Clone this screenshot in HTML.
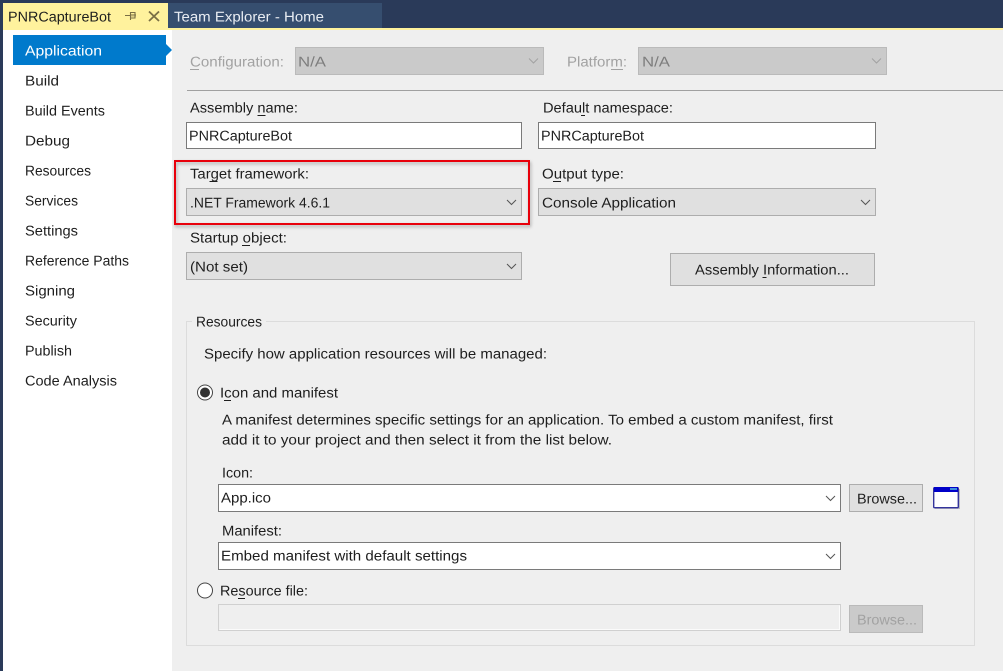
<!DOCTYPE html>
<html><head><meta charset="utf-8"><title>PNRCaptureBot</title>
<style>
html,body{margin:0;padding:0;background:#efefef;overflow:hidden}
svg{display:block}
text{font-family:"Liberation Sans",sans-serif;font-size:14.2px;fill:#1e1e1e;text-rendering:geometricPrecision;transform:translateY(-.7px)}
.d{fill:#a2a2a2}
.f{fill:#e0e0e0;stroke:#adadad}
.g{fill:#cacaca;stroke:#bababa}
.w{fill:#fff;stroke:#7a7a7a}
.c{fill:none;stroke:#555;stroke-width:1}
.cd{fill:none;stroke:#a2a2a2;stroke-width:1}
</style></head><body>
<svg width="1003" height="671" viewBox="0 0 1003 671" xmlns="http://www.w3.org/2000/svg">
<defs><filter id="s" x="-5%" y="-10%" width="110%" height="125%"><feGaussianBlur stdDeviation="1.5"/></filter></defs>
<rect width="1003" height="671" fill="#efefef"/>
<rect x="0" y="0" width="1003" height="30" fill="#2a3a59"/>
<rect x="0" y="0" width="3" height="671" fill="#2a3a59"/>
<rect x="168" y="3" width="214" height="25" fill="#364e6f"/>
<rect x="3" y="28" width="1000" height="2" fill="#fff29d"/>
<rect x="3" y="3" width="165" height="27" fill="#fff29d"/>
<rect x="3" y="30" width="169" height="641" fill="#fff"/>
<text x="8" y="22" textLength="103" lengthAdjust="spacingAndGlyphs">PNRCaptureBot</text>
<path d="M125 15.500h5M130.500 12v8M131 12.500h4v5.500h-4" fill="none" stroke="#7a6f45" stroke-width="1.1"/>
<path d="M131 14h5v2.500h-5z" fill="#7a6f45" opacity=".55"/>
<path d="M149 11.500L159 21M159 11.500L149 21" fill="none" stroke="#7a6f45" stroke-width="1.8"/>
<text x="174" y="22" textLength="150" lengthAdjust="spacingAndGlyphs" style="fill:#e8ecf2">Team Explorer - Home</text>

<rect x="13" y="35" width="153" height="30" fill="#007acc"/>
<path d="M166 44L172 50L166 56Z" fill="#007acc"/>
<text x="25" y="56" textLength="77" lengthAdjust="spacingAndGlyphs" style="fill:#fff">Application</text>
<text x="25" y="86" textLength="34" lengthAdjust="spacingAndGlyphs">Build</text>
<text x="25" y="116" textLength="80" lengthAdjust="spacingAndGlyphs">Build Events</text>
<text x="25" y="146" textLength="45" lengthAdjust="spacingAndGlyphs">Debug</text>
<text x="25" y="176" textLength="66" lengthAdjust="spacingAndGlyphs">Resources</text>
<text x="25" y="206" textLength="53" lengthAdjust="spacingAndGlyphs">Services</text>
<text x="25" y="236" textLength="53" lengthAdjust="spacingAndGlyphs">Settings</text>
<text x="25" y="266" textLength="104" lengthAdjust="spacingAndGlyphs">Reference Paths</text>
<text x="25" y="296" textLength="50" lengthAdjust="spacingAndGlyphs">Signing</text>
<text x="25" y="326" textLength="52" lengthAdjust="spacingAndGlyphs">Security</text>
<text x="25" y="356" textLength="47" lengthAdjust="spacingAndGlyphs">Publish</text>
<text x="25" y="386" textLength="92" lengthAdjust="spacingAndGlyphs">Code Analysis</text>

<text class="d" x="190" y="67" textLength="94" lengthAdjust="spacingAndGlyphs">Configuration:</text>
<path d="M190 69.500h9" stroke="#a2a2a2"/>
<rect class="g" x="295.500" y="47.500" width="248" height="27"/>
<text x="298" y="67" textLength="28" lengthAdjust="spacingAndGlyphs" style="fill:#7d7d7d">N/A</text>
<path class="cd" d="M529 58.500l4.500 4.500l4.500-4.500"/>
<text class="d" x="567" y="67" textLength="60" lengthAdjust="spacingAndGlyphs">Platform:</text>
<path d="M611 69.500h12" stroke="#a2a2a2"/>
<rect class="g" x="638.500" y="47.500" width="248" height="27"/>
<text x="642" y="67" textLength="28" lengthAdjust="spacingAndGlyphs" style="fill:#7d7d7d">N/A</text>
<path class="cd" d="M872 58.500l4.500 4.500l4.500-4.500"/>
<rect x="187" y="90" width="816" height="1" fill="#a0a0a0"/>

<text x="190" y="113" textLength="108" lengthAdjust="spacingAndGlyphs">Assembly name:</text>
<path d="M257.500 115.500h8" stroke="#1e1e1e"/>
<rect class="w" x="186.500" y="122.500" width="335" height="26"/>
<text x="189" y="141" textLength="103" lengthAdjust="spacingAndGlyphs">PNRCaptureBot</text>
<text x="543" y="113" textLength="130" lengthAdjust="spacingAndGlyphs">Default namespace:</text>
<path d="M581 115.500h4" stroke="#1e1e1e"/>
<rect class="w" x="538.500" y="122.500" width="337" height="26"/>
<text x="541" y="141" textLength="103" lengthAdjust="spacingAndGlyphs">PNRCaptureBot</text>

<rect x="176" y="163" width="354" height="63" fill="none" stroke="#777" stroke-width="2" opacity=".6" filter="url(#s)"/>
<rect x="175" y="161" width="354" height="63" fill="none" stroke="#e8000b" stroke-width="2"/>

<text x="190" y="179" textLength="119" lengthAdjust="spacingAndGlyphs">Target framework:</text>
<path d="M209.500 181.500h8" stroke="#1e1e1e"/>
<rect class="f" x="186.500" y="188.500" width="335" height="27"/>
<text x="190" y="208" textLength="140" lengthAdjust="spacingAndGlyphs">.NET Framework 4.6.1</text>
<path class="c" d="M507 200l4.500 4.500l4.500-4.500"/>
<text x="542" y="179" textLength="82" lengthAdjust="spacingAndGlyphs">Output type:</text>
<path d="M553 181.500h8" stroke="#1e1e1e"/>
<rect class="f" x="538.500" y="188.500" width="337" height="27"/>
<text x="542" y="208" textLength="134" lengthAdjust="spacingAndGlyphs">Console Application</text>
<path class="c" d="M861 200l4.500 4.500l4.500-4.500"/>
<text x="190" y="243" textLength="97" lengthAdjust="spacingAndGlyphs">Startup object:</text>
<path d="M242 245.500h8" stroke="#1e1e1e"/>
<rect class="f" x="186.500" y="252.500" width="335" height="27"/>
<text x="190" y="272" textLength="58" lengthAdjust="spacingAndGlyphs">(Not set)</text>
<path class="c" d="M507 264l4.500 4.500l4.500-4.500"/>
<rect class="f" x="670.500" y="253.500" width="204" height="32"/>
<text x="695" y="275" textLength="154" lengthAdjust="spacingAndGlyphs">Assembly Information...</text>
<path d="M762.500 277.500h4" stroke="#1e1e1e"/>

<path d="M192 321.500H186.500V645.500H974.500V321.500H266" fill="none" stroke="#dcdcdc"/>
<text x="196" y="327" textLength="66" lengthAdjust="spacingAndGlyphs">Resources</text>
<text x="204" y="359" textLength="343" lengthAdjust="spacingAndGlyphs">Specify how application resources will be managed:</text>

<circle cx="205" cy="392.500" r="7.500" fill="#fff" stroke="#444" stroke-width="1"/>
<circle cx="205" cy="392.500" r="5" fill="#333"/>
<text x="220" y="398" textLength="118" lengthAdjust="spacingAndGlyphs">Icon and manifest</text>
<path d="M224 400.500h7" stroke="#1e1e1e"/>
<text x="222" y="425" textLength="611" lengthAdjust="spacingAndGlyphs">A manifest determines specific settings for an application. To embed a custom manifest, first</text>
<text x="222" y="445" textLength="390" lengthAdjust="spacingAndGlyphs">add it to your project and then select it from the list below.</text>

<text x="222" y="478" textLength="31" lengthAdjust="spacingAndGlyphs">Icon:</text>
<rect class="w" x="218.500" y="484.500" width="622" height="27"/>
<text x="221" y="503" textLength="50" lengthAdjust="spacingAndGlyphs">App.ico</text>
<path class="c" d="M826 496l4.500 4.500l4.500-4.500"/>
<rect class="f" x="849.500" y="484.500" width="73" height="27"/>
<text x="857" y="504" textLength="60" lengthAdjust="spacingAndGlyphs">Browse...</text>
<rect x="935" y="489" width="25" height="20" fill="#9a9aa5" opacity=".6"/>
<rect x="933.700" y="487.700" width="24.600" height="20" rx="1" fill="#fff" stroke="#34349c" stroke-width="1.400"/>
<rect x="934" y="487" width="24" height="5" fill="#0000c8"/>
<rect x="950" y="488" width="7" height="2" fill="#3f8fdc"/>

<text x="222" y="536" textLength="60" lengthAdjust="spacingAndGlyphs">Manifest:</text>
<rect class="w" x="218.500" y="542.500" width="622" height="27"/>
<text x="221" y="561" textLength="246" lengthAdjust="spacingAndGlyphs">Embed manifest with default settings</text>
<path class="c" d="M826 554l4.500 4.500l4.500-4.500"/>

<circle cx="205" cy="590.500" r="7.500" fill="#fff" stroke="#444" stroke-width="1"/>
<text x="220" y="596" textLength="88" lengthAdjust="spacingAndGlyphs">Resource file:</text>
<path d="M238 598.500h7" stroke="#1e1e1e"/>
<rect x="218.500" y="604.500" width="622" height="26" fill="#efefef" stroke="#d0d0d0"/>
<path d="M839.500 605.500V629.500H219.500" fill="none" stroke="#fbfbfb"/>
<rect class="g" x="849.500" y="605.500" width="73" height="27"/>
<text x="857" y="625" textLength="60" lengthAdjust="spacingAndGlyphs" style="fill:#a2a2a2">Browse...</text>
</svg>
</body></html>
